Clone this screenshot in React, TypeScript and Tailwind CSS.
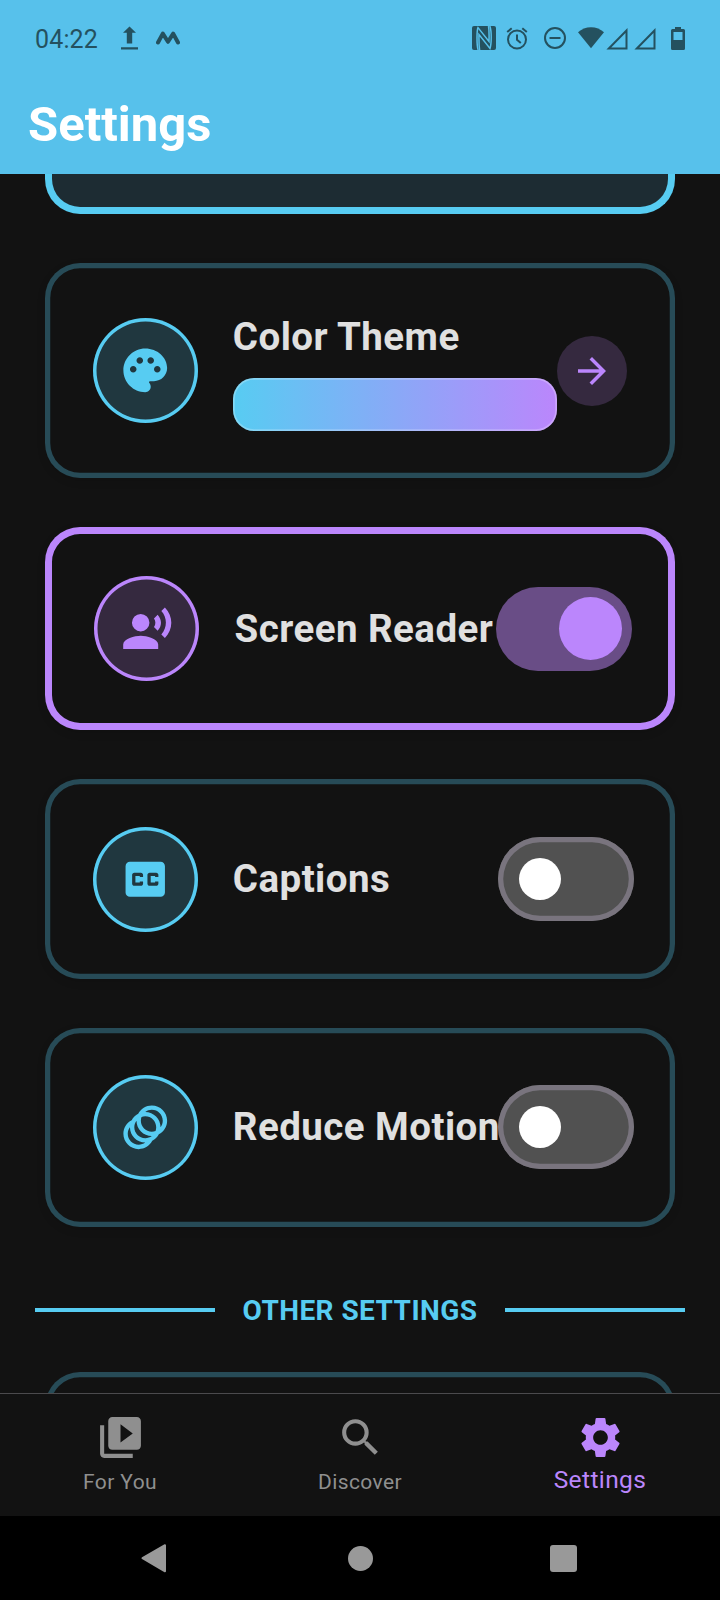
import type { ReactNode } from "react";
import {
  MdArrowForward,
  MdClosedCaption,
  MdSearch,
  MdSettings,
  MdVideoLibrary,
} from "react-icons/md";

function Glyph({ d }: { d: string }) {
  return (
    <svg viewBox="0 0 24 24" className="size-[52.5px]" fill="currentColor">
      <path fillRule="evenodd" d={d} />
    </svg>
  );
}

const palettePath =
  "M12 2C6.49 2 2 6.49 2 12s4.49 10 10 10c1.38 0 2.5-1.12 2.5-2.5 0-.61-.23-1.2-.64-1.67-.08-.1-.13-.21-.13-.33 0-.28.22-.5.5-.5H16c3.31 0 6-2.69 6-6 0-4.96-4.49-9-10-9zm5.5 11c-.83 0-1.5-.67-1.5-1.5s.67-1.5 1.5-1.5 1.5.67 1.5 1.5-.67 1.5-1.5 1.5zm-3-4c-.83 0-1.5-.67-1.5-1.5S13.67 6 14.5 6s1.5.67 1.5 1.5S15.33 9 14.5 9zM5 11.5c0-.83.67-1.5 1.5-1.5s1.5.67 1.5 1.5S7.33 13 6.5 13 5 12.33 5 11.5zm6-4c0 .83-.67 1.5-1.5 1.5S8 8.33 8 7.5 8.67 6 9.5 6s1.5.67 1.5 1.5z";

const voicePath =
  "M9 5a4 4 0 1 1 0 8 4 4 0 1 1 0-8zM9 15c-2.67 0-8 1.34-8 4v2h16v-2c0-2.66-5.33-4-8-4zM16.76 5.36l-1.68 1.69c.84 1.18.84 2.71 0 3.89l1.68 1.69c2.02-2.02 2.02-5.07 0-7.27zM20.07 2l-1.63 1.63c2.77 3.02 2.77 7.56 0 10.74L20.07 16c3.9-3.89 3.91-9.95 0-14z";

const motionPath =
  "M15 2c-2.71 0-5.05 1.54-6.22 3.78-1.28.67-2.34 1.72-3 3C3.54 9.95 2 12.29 2 15c0 3.87 3.13 7 7 7 2.71 0 5.05-1.54 6.22-3.78 1.28-.67 2.34-1.72 3-3C20.46 14.05 22 11.71 22 9c0-3.87-3.13-7-7-7zM9 20c-2.76 0-5-2.24-5-5 0-1.12.37-2.16 1-3 0 3.87 3.13 7 7 7-.84.63-1.88 1-3 1zm3-3c-2.76 0-5-2.24-5-5 0-1.12.37-2.16 1-3 0 3.86 3.13 6.99 7 7-.84.63-1.88 1-3 1zm4.7-3.3c-.53.19-1.1.3-1.7.3-2.76 0-5-2.24-5-5 0-.6.11-1.17.3-1.7.53-.19 1.1-.3 1.7-.3 2.76 0 5 2.24 5 5 0 .6-.11 1.17-.3 1.7zM19 12c0-3.86-3.13-6.99-7-7 .84-.63 1.87-1 3-1 2.76 0 5 2.24 5 5 0 1.12-.37 2.16-1 3z";

function StatusBar() {
  return (
    <div className="flex h-[76px] items-center justify-between pl-[35px] pr-[35px] text-[#24515f]">
      <div className="flex items-center">
        <span className="w-[86px] pt-[2px] text-[25px] leading-none tracking-[0.15px]">04:22</span>
        <svg width="17" height="24" viewBox="0 0 17 24" fill="currentColor">
          <path d="M8.5 0.5 15 6.7h-3.8V17.5H5.8V6.7H2zM0 21.3h17v2.2H0z" />
        </svg>
        <svg width="24" height="14" viewBox="0 0 24 14" className="ml-[18px]" fill="none" stroke="currentColor" strokeWidth="4" strokeLinecap="round" strokeLinejoin="round">
          <path d="M2 11.5 6.8 2.6 12 10.8 17.2 2.6 22 11.5" />
        </svg>
      </div>
      <div className="flex items-center">
        <svg width="24" height="24" viewBox="0 0 24 24">
          <rect width="24" height="24" rx="2" fill="currentColor" />
          <path d="M6.2 24C5 21 5 17 5 12S5 4 6 1.6L17 15.5C17.2 9 17.2 4 16.5 0" fill="none" stroke="#57c1eb" strokeWidth="1.5" />
          <path d="M7.6 24C6.8 19 6.9 13 7 8.5L18 22.4C19.2 19 19.2 15 19.2 11S19 3 17.8 0" fill="none" stroke="#57c1eb" strokeWidth="1.5" />
        </svg>
        <svg width="22" height="23" viewBox="0 0 22 23" className="ml-[10px]" fill="none" stroke="currentColor" strokeWidth="2">
          <circle cx="11" cy="12.5" r="9" />
          <path d="M11 7.5v5.2l3.8 3.3" />
          <path d="M1.2 5 5.7 1.3M20.8 5l-4.5-3.7" />
        </svg>
        <svg width="22" height="22" viewBox="0 0 22 22" className="ml-[16px]" fill="none" stroke="currentColor" strokeWidth="2">
          <circle cx="11" cy="11" r="10" />
          <path d="M5.5 11h11" />
        </svg>
        <svg width="26" height="24" viewBox="0 0 26 24" className="ml-[12px]" fill="currentColor">
          <path d="M0 6.3C3.5 3 8 1.2 13 1.2S22.5 3 26 6.3L13 22.3z" />
        </svg>
        <svg width="22" height="23" viewBox="0 0 22 23" className="ml-[2px]" fill="none" stroke="currentColor" strokeWidth="2">
          <path d="M2.8 21.5H20.5V3.5z" />
        </svg>
        <svg width="22" height="23" viewBox="0 0 22 23" className="ml-[6px]" fill="none" stroke="currentColor" strokeWidth="2">
          <path d="M2.8 21.5H20.5V3.5z" />
        </svg>
        <svg width="14" height="23" viewBox="0 0 14 23" className="ml-[15px]" fill="currentColor">
          <path fillRule="evenodd" d="M4 0h6v2h2.5Q14 2 14 3.5v18Q14 23 12.5 23h-11Q0 23 0 21.5v-18Q0 2 1.5 2H4zM2.5 5v8h9V5z" />
        </svg>
      </div>
    </div>
  );
}

function IconBadge({ accent, children }: { accent: "blue" | "purple"; children: ReactNode }) {
  const tone =
    accent === "purple"
      ? "bg-[#35293f] text-[#bb86fc] shadow-[inset_0_0_0_3.5px_#bb86fc]"
      : "bg-[#20373f] text-[#57ccf2] shadow-[inset_0_0_0_3.5px_#57ccf2]";
  return (
    <div className={`flex size-[105px] shrink-0 items-center justify-center rounded-full ${tone}`}>
      {children}
    </div>
  );
}

function Toggle({ on }: { on: boolean }) {
  return on ? (
    <div role="switch" aria-checked="true" className="-mr-[6.5px] ml-auto flex h-[84px] w-[136.5px] shrink-0 items-center justify-end rounded-full bg-[#694d86] pr-[10.5px]">
      <div className="size-[63px] rounded-full bg-[#bb86fc]" />
    </div>
  ) : (
    <div role="switch" aria-checked="false" className="-mr-[6.7px] mb-[0.6px] ml-auto flex h-[84px] w-[136.5px] shrink-0 items-center rounded-full bg-[#515151] pl-[21px] shadow-[inset_0_0_0_5.25px_#79747e]">
      <div className="size-[42px] rounded-full bg-white" />
    </div>
  );
}

function ToggleCard({ label, on, icon }: { label: string; on: boolean; icon: ReactNode }) {
  const frame = on
    ? "p-[49px] shadow-[inset_0_0_0_7px_#bb86fc,0_3px_8px_rgba(0,0,0,0.12)]"
    : "p-[47.25px] shadow-[inset_0_0_0_5.25px_#274b57,0_3px_8px_rgba(0,0,0,0.12)]";
  return (
    <section className={`flex shrink-0 items-center rounded-[35px] bg-[#121212] ${frame}`}>
      <IconBadge accent={on ? "purple" : "blue"}>{icon}</IconBadge>
      <h2 className="ml-[35.2px] w-0 whitespace-nowrap text-[38.5px] font-bold leading-[52.5px] tracking-[0.45px]">{label}</h2>
      <Toggle on={on} />
    </section>
  );
}

function NavItem({ label, icon, active = false }: { label: string; icon: ReactNode; active?: boolean }) {
  return (
    <div className={`flex flex-1 flex-col items-center pt-[19px] ${active ? "text-[#bb86fc]" : "text-[#8f8f8f]"}`}>
      {icon}
      <span
        className={
          active
            ? "mt-[3px] text-[24.5px] leading-[29px] tracking-[0.4px]"
            : "mt-[8px] text-[21px] leading-[25px] tracking-[0.4px]"
        }
      >
        {label}
      </span>
    </div>
  );
}

export default function App() {
  return (
    <div className="flex h-[1600px] w-[720px] flex-col overflow-hidden bg-[#121212] font-['Roboto',sans-serif] text-[#e0e0e0]">
      <header className="h-[174px] shrink-0 bg-[#57c1eb]">
        <StatusBar />
        <h1 className="pl-[28px] pt-[20px] text-[49px] font-bold leading-[58px] text-white">Settings</h1>
      </header>

      <main className="flex h-[1219px] shrink-0 flex-col overflow-hidden">
        <div className="flex flex-col gap-[49px] px-[45.4px]">
          <div className="h-[39.75px] shrink-0 rounded-b-[35px] border-[7px] border-t-0 border-[#57ccf2] bg-[#1d2c33]" />

          <section className="flex shrink-0 items-center rounded-[35px] bg-[#121212] p-[47.25px] shadow-[inset_0_0_0_5.25px_#274b57,0_3px_8px_rgba(0,0,0,0.12)]">
            <IconBadge accent="blue">
              <Glyph d={palettePath} />
            </IconBadge>
            <div className="ml-[35px] flex flex-1 flex-col gap-[14.75px]">
              <h2 className="whitespace-nowrap pl-[0.2px] text-[38.5px] font-bold leading-[53.5px] tracking-[0.45px]">Color Theme</h2>
              <div className="h-[52.75px] rounded-[21px] bg-linear-to-r/srgb from-[#57ccf2] to-[#bb86fc] shadow-[inset_0_0_0_1.75px_rgba(255,255,255,0.25)]" />
            </div>
            <div className="flex size-[70px] shrink-0 items-center justify-center rounded-full bg-[#35293f] text-[#bb86fc]">
              <MdArrowForward size={42} />
            </div>
          </section>

          <ToggleCard label="Screen Reader" on icon={<Glyph d={voicePath} />} />
          <ToggleCard label="Captions" on={false} icon={<MdClosedCaption size={52.5} />} />
          <ToggleCard label="Reduce Motion" on={false} icon={<Glyph d={motionPath} />} />
        </div>

        <div className="mt-[62px] flex h-[42px] shrink-0 items-center gap-[28px] px-[35px] text-[#57ccf2]">
          <div className="h-[4px] flex-1 bg-[#57ccf2]" />
          <h3 className="whitespace-nowrap pt-[2px] text-[28px] font-bold leading-[42px] tracking-[0.45px]">OTHER SETTINGS</h3>
          <div className="h-[4px] flex-1 bg-[#57ccf2]" />
        </div>

        <div className="mx-[45.4px] mt-[41px] h-[200px] shrink-0 rounded-[35px] shadow-[inset_0_0_0_5.25px_#274b57]" />
      </main>

      <nav className="flex h-[123px] shrink-0 border-t border-[#4b4a4d] bg-[#121212]">
        <NavItem label="For You" icon={<MdVideoLibrary size={49} />} />
        <NavItem label="Discover" icon={<MdSearch size={49} />} />
        <NavItem label="Settings" icon={<MdSettings size={49} />} active />
      </nav>

      <footer className="flex h-[84px] shrink-0 items-center justify-between bg-black pl-[141px] pr-[143px] text-[#999999]">
        <svg width="25" height="30" viewBox="0 0 25 30" fill="currentColor" stroke="currentColor" strokeWidth="2" strokeLinejoin="round">
          <path d="M1.5 15.2 24 2.2V28.3z" />
        </svg>
        <div className="ml-[4px] size-[25px] rounded-full bg-[#999999]" />
        <div className="size-[27px] rounded-[3px] bg-[#999999]" />
      </footer>
    </div>
  );
}
